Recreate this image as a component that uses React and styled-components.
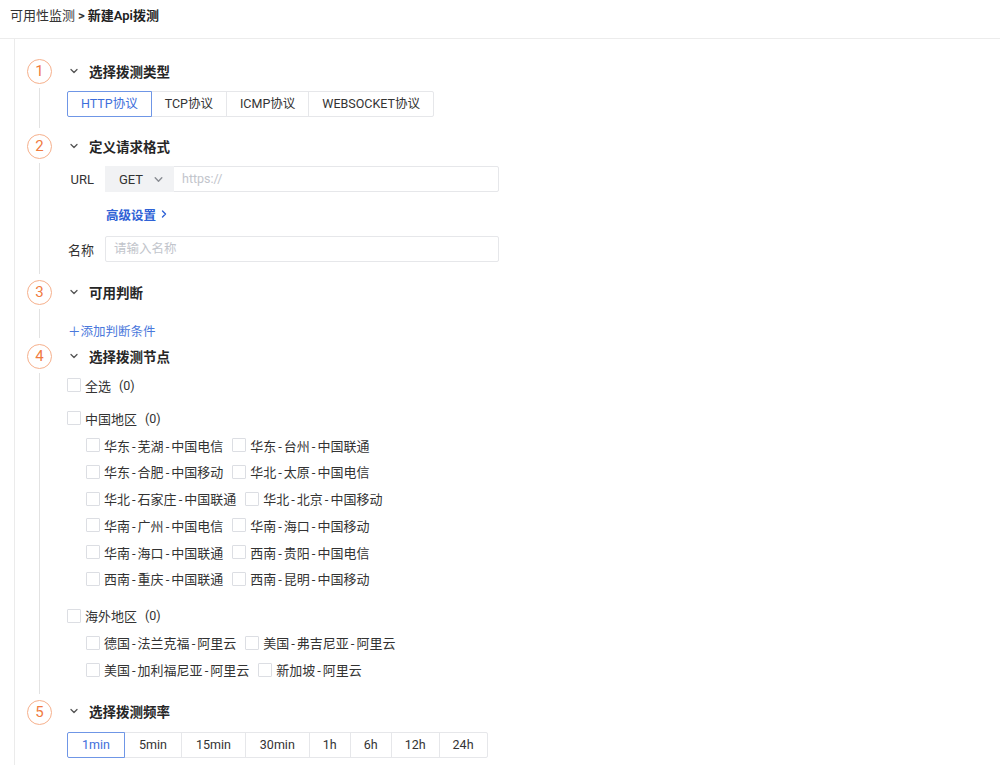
import React from 'react';
import styled, { createGlobalStyle } from 'styled-components';

const GlobalStyle = createGlobalStyle`
  html, body {
    margin: 0;
    padding: 0;
    background: #fff;
  }
  body {
    font-family: Roboto, "Noto Sans CJK SC", sans-serif;
    font-size: 13px;
    color: #333;
  }
  * { box-sizing: border-box; }
`;

const Header = styled.div`
  height: 39px;
  padding: 7px 10px 0;
  line-height: 18px;
  font-size: 13px;
  color: #333;
  border-bottom: 1px solid #ececec;
  .current {
    font-weight: 600;
    color: #222;
  }
  .sep {
    font-weight: 600;
    margin: 0 3px;
  }
`;

const Body = styled.div`
  margin-left: 14px;
  border-left: 1px solid #ebebeb;
  padding: 20px 0 0 12px;
  min-height: 726px;
`;

const StepRow = styled.div`
  display: flex;
  gap: 15px;
`;

const Rail = styled.div`
  width: 25px;
  display: flex;
  flex-direction: column;
  align-items: center;
  flex-shrink: 0;
`;

const Circle = styled.div`
  width: 25px;
  height: 25px;
  border-radius: 50%;
  border: 1px solid #f6b08c;
  color: #f07b3f;
  font-size: 15px;
  line-height: 23px;
  text-align: center;
`;

const Connector = styled.div`
  flex: 1;
  width: 1px;
  background: #e2e2e2;
  margin: 4px 0 6px;
`;

const StepContent = styled.div`
  flex: 1;
  padding-bottom: ${p => p.$pb}px;
`;

const StepTitle = styled.div`
  height: 25px;
  padding-bottom: 2px;
  display: flex;
  align-items: center;
  font-size: 13.5px;
  font-weight: 700;
  color: #262626;
  svg {
    margin: 0 10px 0 2px;
  }
`;

const Segment = styled.div`
  display: flex;
  margin-top: 7px;
`;

const SegButton = styled.div`
  height: 26px;
  line-height: 24px;
  padding: 0 ${p => p.$px || 13}px;
  border: 1px solid ${p => (p.$active ? '#6f96e6' : '#e6e7ea')};
  margin-left: -1px;
  color: ${p => (p.$active ? '#3d6edb' : '#333')};
  font-size: 12.5px;
  position: relative;
  z-index: ${p => (p.$active ? 1 : 0)};
  &:first-child {
    margin-left: 0;
    border-radius: 2px 0 0 2px;
  }
  &:last-child {
    border-radius: 0 2px 2px 0;
  }
`;

const FormRow = styled.div`
  display: flex;
  align-items: center;
  margin-top: ${p => p.$mt}px;
`;

const FieldLabel = styled.div`
  width: 38px;
  padding-right: 11px;
  text-align: right;
  color: #333;
  font-size: 13px;
  flex-shrink: 0;
`;

const InputGroup = styled.div`
  width: 394px;
  height: 26px;
  display: flex;
  border: 1px solid #e6e7ea;
  border-radius: 2px;
`;

const MethodSelect = styled.div`
  width: 69px;
  margin: -1px 0 -1px -1px;
  background: #f1f2f4;
  display: flex;
  align-items: center;
  justify-content: center;
  gap: 10px;
  color: #333;
  font-size: 13px;
  padding-left: 4px;
`;

const Placeholder = styled.div`
  flex: 1;
  padding: 0 8px;
  line-height: 24px;
  color: #c2c5cc;
  font-size: 12.5px;
`;

const AdvancedLink = styled.div`
  margin-left: 39px;
  height: 20px;
  display: flex;
  align-items: center;
  gap: 3px;
  color: #2f62d6;
  font-weight: 700;
  font-size: 12.5px;
`;

const AddLink = styled.div`
  margin-top: 17px;
  margin-left: 1px;
  height: 20px;
  line-height: 20px;
  color: #4a78dc;
  font-size: 12.5px;
`;

const CheckRow = styled.div`
  display: flex;
  align-items: center;
  height: 20px;
  margin-top: ${p => p.$mt || 0}px;
`;

const CheckItem = styled.label`
  display: flex;
  align-items: center;
  gap: 4px;
  margin-right: 9px;
  color: #333;
  font-size: 13px;
  white-space: nowrap;
`;

const Box = styled.span`
  width: 14px;
  height: 14px;
  border: 1px solid #dcdee3;
  border-radius: 1px;
  background: #fff;
  flex-shrink: 0;
`;

const Count = styled.span`
  margin-left: 4px;
  font-size: 12.5px;
  color: #333;
`;

const Dash = styled.span`
  margin: 0 2px;
`;

const NodeList = styled.div`
  display: flex;
  flex-direction: column;
  gap: 6.8px;
  margin-top: 7px;
  margin-left: 19px;
`;

const Chevron = ({ color = '#555', size = 10, dir = 'down' }) => (
  <svg width={size} height={size} viewBox="0 0 10 10" fill="none">
    {dir === 'down' ? (
      <path d="M2 3.5 L5 6.5 L8 3.5" stroke={color} strokeWidth="1.3" strokeLinecap="round" strokeLinejoin="round" />
    ) : (
      <path d="M3.5 2 L6.5 5 L3.5 8" stroke={color} strokeWidth="1.4" strokeLinecap="round" strokeLinejoin="round" />
    )}
  </svg>
);

const NodeLabel = ({ text }) => {
  const parts = text.split('-');
  return (
    <span>
      {parts.map((p, i) => (
        <React.Fragment key={i}>
          {i > 0 && <Dash>-</Dash>}
          {p}
        </React.Fragment>
      ))}
    </span>
  );
};

const Node = ({ text }) => (
  <CheckItem>
    <Box />
    <NodeLabel text={text} />
  </CheckItem>
);

const chinaNodes = [
  ['华东-芜湖-中国电信', '华东-台州-中国联通'],
  ['华东-合肥-中国移动', '华北-太原-中国电信'],
  ['华北-石家庄-中国联通', '华北-北京-中国移动'],
  ['华南-广州-中国电信', '华南-海口-中国移动'],
  ['华南-海口-中国联通', '西南-贵阳-中国电信'],
  ['西南-重庆-中国联通', '西南-昆明-中国移动'],
];

const abroadNodes = [
  ['德国-法兰克福-阿里云', '美国-弗吉尼亚-阿里云'],
  ['美国-加利福尼亚-阿里云', '新加坡-阿里云'],
];

const protocols = ['HTTP协议', 'TCP协议', 'ICMP协议', 'WEBSOCKET协议'];
const rates = [
  { t: '1min', px: 14 },
  { t: '5min', px: 14 },
  { t: '15min', px: 14 },
  { t: '30min', px: 14 },
  { t: '1h', px: 13 },
  { t: '6h', px: 13 },
  { t: '12h', px: 13 },
  { t: '24h', px: 13 },
];

const Step = ({ num, title, last, pb, children }) => (
  <StepRow>
    <Rail>
      <Circle>{num}</Circle>
      {!last && <Connector />}
    </Rail>
    <StepContent $pb={pb}>
      <StepTitle>
        <Chevron />
        {title}
      </StepTitle>
      {children}
    </StepContent>
  </StepRow>
);

export default function App() {
  return (
    <>
      <GlobalStyle />
      <Header>
        可用性监测<span className="sep">&gt;</span><span className="current">新建Api拨测</span>
      </Header>
      <Body>
        <Step num={1} title="选择拨测类型" pb={17}>
          <Segment>
            {protocols.map((p, i) => (
              <SegButton key={p} $active={i === 0}>{p}</SegButton>
            ))}
          </Segment>
        </Step>
        <Step num={2} title="定义请求格式" pb={18}>
          <FormRow $mt={7}>
            <FieldLabel>URL</FieldLabel>
            <InputGroup>
              <MethodSelect>
                GET
                <Chevron color="#8a8d93" size={11} />
              </MethodSelect>
              <Placeholder>https://</Placeholder>
            </InputGroup>
          </FormRow>
          <FormRow $mt={12}>
            <AdvancedLink>
              高级设置
              <Chevron color="#2f62d6" size={10} dir="right" />
            </AdvancedLink>
          </FormRow>
          <FormRow $mt={12}>
            <FieldLabel>名称</FieldLabel>
            <InputGroup>
              <Placeholder>请输入名称</Placeholder>
            </InputGroup>
          </FormRow>
        </Step>
        <Step num={3} title="可用判断" pb={2}>
          <AddLink>＋添加判断条件</AddLink>
        </Step>
        <Step num={4} title="选择拨测节点" pb={20}>
          <CheckRow $mt={6}>
            <CheckItem>
              <Box />
              全选<Count>(0)</Count>
            </CheckItem>
          </CheckRow>
          <CheckRow $mt={13}>
            <CheckItem>
              <Box />
              中国地区<Count>(0)</Count>
            </CheckItem>
          </CheckRow>
          <NodeList>
            {chinaNodes.map((row, i) => (
              <CheckRow key={i}>
                {row.map(n => <Node key={n} text={n} />)}
              </CheckRow>
            ))}
          </NodeList>
          <CheckRow $mt={17}>
            <CheckItem>
              <Box />
              海外地区<Count>(0)</Count>
            </CheckItem>
          </CheckRow>
          <NodeList>
            {abroadNodes.map((row, i) => (
              <CheckRow key={i}>
                {row.map(n => <Node key={n} text={n} />)}
              </CheckRow>
            ))}
          </NodeList>
        </Step>
        <Step num={5} title="选择拨测频率" last pb={0}>
          <Segment>
            {rates.map((r, i) => (
              <SegButton key={r.t} $active={i === 0} $px={r.px}>{r.t}</SegButton>
            ))}
          </Segment>
        </Step>
      </Body>
    </>
  );
}
